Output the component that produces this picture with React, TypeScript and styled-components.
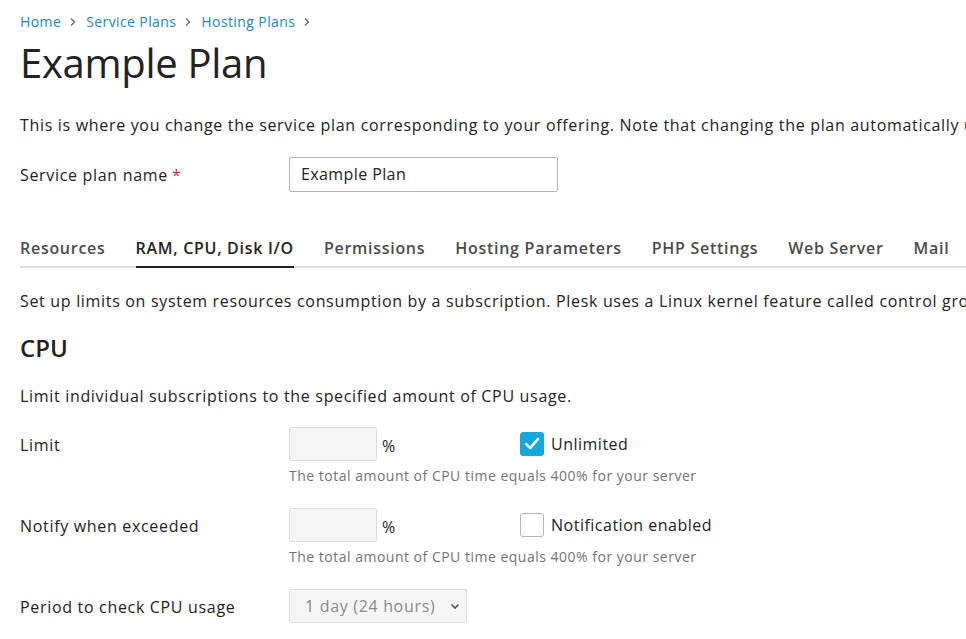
import styled, { createGlobalStyle } from 'styled-components';

const GlobalStyle = createGlobalStyle`
	html, body {
		margin: 0;
		padding: 0;
		background: #fff;
		overflow: hidden;
	}
	body {
		font-family: "Open Sans", "Liberation Sans", sans-serif;
		color: #222;
		font-size: 16px;
		letter-spacing: 0.68px;
	}
`;

const Page = styled.div`
	padding: 12px 20px 0 20px;
	width: 946px;
	overflow: hidden;
`;

const Breadcrumbs = styled.nav`
	display: flex;
	align-items: center;
	font-size: 14px;
	line-height: 20px;
	gap: 7px;
	letter-spacing: 0.4px;
`;

const Crumb = styled.a`
	color: #1b86c4;
	text-decoration: none;
`;

const Chevron = styled.svg`
	width: 10px;
	height: 10px;
	margin-right: 1px;
`;

const Title = styled.h1`
	margin: 4px 0 0 0;
	font-size: 40px;
	font-weight: 400;
	line-height: 54px;
	letter-spacing: -0.3px;
`;

const Intro = styled.p`
	margin: 23px 0 0 0;
	line-height: 24px;
	white-space: nowrap;
`;

const FieldRow = styled.div<{ $top?: number }>`
	display: grid;
	grid-template-columns: 269px auto;
	margin-top: ${(p) => p.$top ?? 0}px;
`;

const Label = styled.div`
	padding-top: 6px;
	line-height: 24px;
`;

const Required = styled.span`
	color: #d0284a;
	margin-left: 4px;
`;

const TextInput = styled.div`
	box-sizing: border-box;
	width: 269px;
	height: 35px;
	border: 1px solid #b5b5b5;
	border-radius: 2px;
	padding: 0 11px;
	line-height: 33px;
	background: #fff;
	letter-spacing: 0.4px;
`;

const Tabs = styled.div`
	display: flex;
	gap: 30px;
	margin-top: 44px;
	border-bottom: 2px solid #ddd;
	white-space: nowrap;
`;

const Tab = styled.div<{ $active?: boolean }>`
	font-weight: 600;
	color: ${(p) => (p.$active ? '#222' : '#4b4b4b')};
	line-height: 24px;
	padding-bottom: 6px;
	margin-bottom: -2px;
	border-bottom: 2px solid ${(p) => (p.$active ? '#222' : 'transparent')};
	letter-spacing: 0.72px;
`;

const Section = styled.h2`
	margin: 19px 0 0 0;
	font-size: 24px;
	font-weight: 600;
	line-height: 32px;
	letter-spacing: 0;
`;

const SubText = styled.p<{ $top: number }>`
	margin: ${(p) => p.$top}px 0 0 0;
	line-height: 24px;
	white-space: nowrap;
`;

const Control = styled.div`
	display: flex;
	flex-direction: column;
`;

const InputLine = styled.div`
	display: flex;
	align-items: center;
`;

const SmallInput = styled.div`
	box-sizing: border-box;
	width: 88px;
	height: 34px;
	border: 1px solid #ddd;
	border-radius: 2px;
	background: #f5f5f5;
`;

const Unit = styled.span`
	margin-left: 5px;
	width: 138px;
	padding-top: 4px;
`;

const CheckLabel = styled.label`
	display: flex;
	align-items: center;
	gap: 7px;
	line-height: 24px;
	letter-spacing: 0.5px;
`;

const Box = styled.span<{ $checked?: boolean }>`
	box-sizing: border-box;
	width: 24px;
	height: 24px;
	border-radius: 3px;
	border: 1px solid ${(p) => (p.$checked ? '#16a8dd' : '#b5b5b5')};
	background: ${(p) => (p.$checked ? '#16a8dd' : '#fff')};
	display: flex;
	align-items: center;
	justify-content: center;
`;

const Hint = styled.div`
	margin-top: 5px;
	font-size: 14px;
	line-height: 20px;
	color: #737373;
	letter-spacing: 0.5px;
`;

const Select = styled.div`
	box-sizing: border-box;
	width: 178px;
	height: 34px;
	border: 1px solid #ddd;
	border-radius: 2px;
	background: #f5f5f5;
	color: #8a8a8a;
	display: flex;
	align-items: center;
	justify-content: space-between;
	padding: 0 5px 0 15px;
`;

const ChevronRight = () => (
	<Chevron viewBox="0 0 10 10">
		<path d="M3 1.5 L6.5 5 L3 8.5" fill="none" stroke="#666" strokeWidth="1.3" />
	</Chevron>
);

export default function App() {
	return (
		<>
			<GlobalStyle />
			<Page>
				<Breadcrumbs>
					<Crumb>Home</Crumb>
					<ChevronRight />
					<Crumb>Service Plans</Crumb>
					<ChevronRight />
					<Crumb>Hosting Plans</Crumb>
					<ChevronRight />
				</Breadcrumbs>
				<Title>Example Plan</Title>
				<Intro>
					This is where you change the service plan corresponding to your offering. Note that changing the plan automatically
					updates all subscriptions associated with it.
				</Intro>
				<FieldRow $top={20}>
					<Label>
						Service plan name<Required>*</Required>
					</Label>
					<TextInput>Example Plan</TextInput>
				</FieldRow>
				<Tabs>
					<Tab>Resources</Tab>
					<Tab $active>RAM, CPU, Disk I/O</Tab>
					<Tab>Permissions</Tab>
					<Tab>Hosting Parameters</Tab>
					<Tab>PHP Settings</Tab>
					<Tab>Web Server</Tab>
					<Tab>Mail</Tab>
					<Tab>Applications</Tab>
				</Tabs>
				<SubText $top={21}>
					Set up limits on system resources consumption by a subscription. Plesk uses a Linux kernel feature called control groups (cgroups).
				</SubText>
				<Section>CPU</Section>
				<SubText $top={20}>Limit individual subscriptions to the specified amount of CPU usage.</SubText>
				<FieldRow $top={19}>
					<Label>Limit</Label>
					<Control>
						<InputLine>
							<SmallInput />
							<Unit>%</Unit>
							<CheckLabel>
								<Box $checked>
									<svg width="18" height="18" viewBox="0 0 18 18">
										<path d="M3.2 9.2 L7.2 13.2 L15 4" fill="none" stroke="#fff" strokeWidth="2.6" strokeLinecap="round" strokeLinejoin="round" />
									</svg>
								</Box>
								Unlimited
							</CheckLabel>
						</InputLine>
						<Hint>The total amount of CPU time equals 400% for your server</Hint>
					</Control>
				</FieldRow>
				<FieldRow $top={22}>
					<Label>Notify when exceeded</Label>
					<Control>
						<InputLine>
							<SmallInput />
							<Unit>%</Unit>
							<CheckLabel>
								<Box />
								Notification enabled
							</CheckLabel>
						</InputLine>
						<Hint>The total amount of CPU time equals 400% for your server</Hint>
					</Control>
				</FieldRow>
				<FieldRow $top={22}>
					<Label>Period to check CPU usage</Label>
					<Select>
						1 day (24 hours)
						<svg width="12" height="12" viewBox="0 0 12 12">
							<path d="M2.5 4.5 L6 8 L9.5 4.5" fill="none" stroke="#555" strokeWidth="1.6" />
						</svg>
					</Select>
				</FieldRow>
			</Page>
		</>
	);
}
